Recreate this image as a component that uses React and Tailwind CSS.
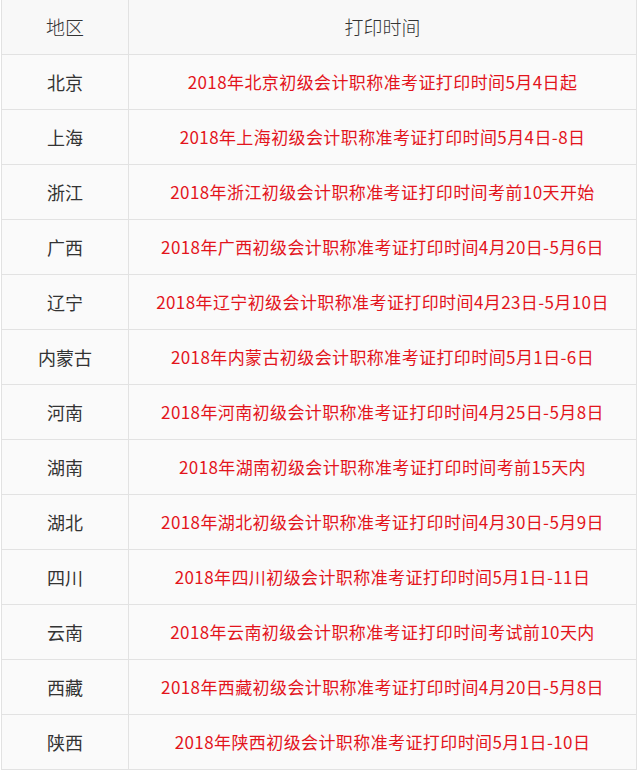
import React from 'react';

const rows = [
  ['北京', '2018年北京初级会计职称准考证打印时间5月4日起'],
  ['上海', '2018年上海初级会计职称准考证打印时间5月4日-8日'],
  ['浙江', '2018年浙江初级会计职称准考证打印时间考前10天开始'],
  ['广西', '2018年广西初级会计职称准考证打印时间4月20日-5月6日'],
  ['辽宁', '2018年辽宁初级会计职称准考证打印时间4月23日-5月10日'],
  ['内蒙古', '2018年内蒙古初级会计职称准考证打印时间5月1日-6日'],
  ['河南', '2018年河南初级会计职称准考证打印时间4月25日-5月8日'],
  ['湖南', '2018年湖南初级会计职称准考证打印时间考前15天内'],
  ['湖北', '2018年湖北初级会计职称准考证打印时间4月30日-5月9日'],
  ['四川', '2018年四川初级会计职称准考证打印时间5月1日-11日'],
  ['云南', '2018年云南初级会计职称准考证打印时间考试前10天内'],
  ['西藏', '2018年西藏初级会计职称准考证打印时间4月20日-5月8日'],
  ['陕西', '2018年陕西初级会计职称准考证打印时间5月1日-10日'],
];

const App = () => {
  return (
    <div
      className="w-[640px] h-[772px] bg-white overflow-hidden"
      style={{ fontFamily: '"Noto Sans CJK SC", "Noto Sans", sans-serif' }}
    >
      <div className="w-[636px] ml-px border-l border-r border-[#e2e2e2] bg-[#fafafa]">
        {/* Header */}
        <div className="flex h-[55px] border-b border-[#e2e2e2] bg-[#f8f8f8]">
          <div className="w-[127px] shrink-0 border-r border-[#e2e2e2] flex items-center justify-center text-[19px] text-[#333] font-light">
            地区
          </div>
          <div className="flex-1 flex items-center justify-center text-[19px] text-[#333] font-light">
            打印时间
          </div>
        </div>

        {/* Rows */}
        {rows.map(([region, time]) => (
          <div key={region} className="flex h-[55px] border-b border-[#e2e2e2]">
            <div className="w-[127px] shrink-0 border-r border-[#e2e2e2] flex items-center justify-center text-[18px] text-[#333]">
              {region}
            </div>
            <div className="flex-1 flex items-center justify-center text-[17px] text-[#e3141c] tracking-[0.4px]">
              {time}
            </div>
          </div>
        ))}
      </div>
    </div>
  );
};

export default App;
